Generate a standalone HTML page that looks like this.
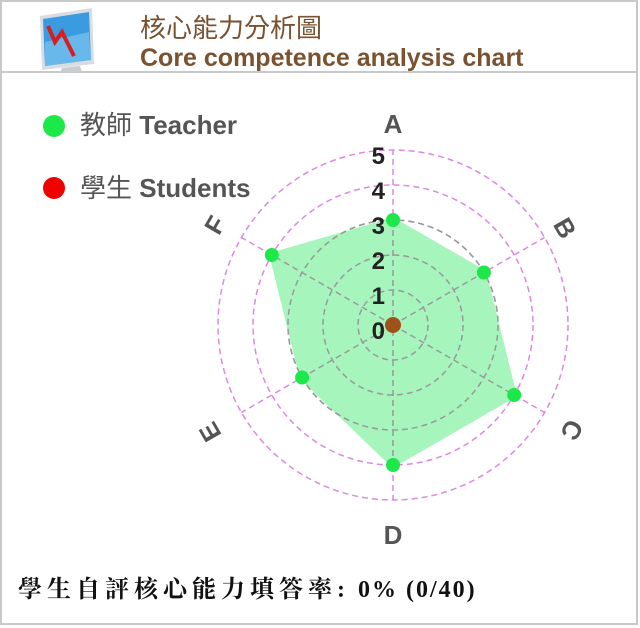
<!DOCTYPE html>
<html><head><meta charset="utf-8"><style>
html,body{margin:0;padding:0;background:#fff;}
body{width:640px;height:628px;overflow:hidden;position:relative;}
</style></head><body>
<svg width="640" height="628" viewBox="0 0 640 628" xmlns="http://www.w3.org/2000/svg" style="position:absolute;left:0;top:0">
<rect x="1" y="1" width="636" height="623" fill="#fff" stroke="#c8c8c8" stroke-width="2"/>
<line x1="1" y1="72" x2="637" y2="72" stroke="#c8c8c8" stroke-width="2"/>
<g>
<polygon points="40,16 92,8 94,64 42,70" fill="#d8dde2"/>
<polygon points="43,19 89,12 91,60 45,66" fill="#3a9be0"/>
<polygon points="45,42 89,32 91,60 45,66" fill="#7cc4f0" opacity="0.7"/>
<polyline points="48,26 55,42 62,32 74,56" fill="none" stroke="#d42020" stroke-width="4"/>
<polygon points="62,68 80,66 82,72 60,73" fill="#c8cdd2"/>
</g>
<text x="140" y="37" font-family="Liberation Sans,'Noto Sans CJK TC',sans-serif" font-size="26" fill="#7a5230">核心能力分析圖</text>
<text x="140" y="66" font-family="Liberation Sans,sans-serif" font-size="25" font-weight="bold" fill="#7a5230">Core competence analysis chart</text>
<circle cx="54" cy="126" r="11" fill="#1de84a"/>
<text x="80" y="134" font-family="Liberation Sans,'Noto Sans CJK TC',sans-serif" font-size="26" font-weight="bold" fill="#555"><tspan font-weight="normal">教師</tspan> Teacher</text>
<circle cx="54" cy="188" r="11" fill="#f00000"/>
<text x="80" y="197" font-family="Liberation Sans,'Noto Sans CJK TC',sans-serif" font-size="26" font-weight="bold" fill="#555"><tspan font-weight="normal">學生</tspan> Students</text>
<g fill="none" stroke="#dd88e0" stroke-width="1.5" stroke-dasharray="6,4">
<circle cx="393" cy="325" r="105"/>
<circle cx="393" cy="325" r="140"/>
<circle cx="393" cy="325" r="175"/>
<line x1="393" y1="325" x2="393" y2="150"/>
<line x1="393" y1="325" x2="544.6" y2="237.5"/>
<line x1="393" y1="325" x2="544.6" y2="412.5"/>
<line x1="393" y1="325" x2="393" y2="500"/>
<line x1="393" y1="325" x2="241.4" y2="412.5"/>
<line x1="393" y1="325" x2="241.4" y2="237.5"/>
</g>
<polygon points="393,220 483.9,272.5 514.2,395 393,465 302.1,377.5 271.8,255" fill="#a6f5bd" stroke="#a6f5bd" stroke-width="5" stroke-linejoin="round"/>
<g fill="none" stroke="#999" stroke-width="1.5" stroke-dasharray="6,4">
<circle cx="393" cy="325" r="35"/>
<circle cx="393" cy="325" r="70"/>
<circle cx="393" cy="325" r="105"/>
<line x1="393" y1="220" x2="393" y2="465"/>
<line x1="393" y1="325" x2="483.9" y2="272.5"/>
<line x1="393" y1="325" x2="514.2" y2="395"/>
<line x1="393" y1="325" x2="302.1" y2="377.5"/>
<line x1="393" y1="325" x2="271.8" y2="255"/>
</g>
<g fill="#1de84a">
<circle cx="393" cy="220" r="7"/><circle cx="483.9" cy="272.5" r="7"/><circle cx="514.2" cy="395" r="7"/>
<circle cx="393" cy="465" r="7"/><circle cx="302.1" cy="377.5" r="7"/><circle cx="271.8" cy="255" r="7"/>
</g>
<circle cx="393" cy="325" r="8" fill="#a0501a"/>
<g font-family="Liberation Sans,sans-serif" font-size="24" font-weight="bold" fill="#222" text-anchor="end">
<text x="385" y="164">5</text><text x="385" y="199">4</text><text x="385" y="234">3</text>
<text x="385" y="269">2</text><text x="385" y="304">1</text><text x="385" y="339">0</text>
</g>
<g font-family="Liberation Sans,sans-serif" font-size="26" font-weight="bold" fill="#555" text-anchor="middle">
<text x="393" y="133">A</text>
<text transform="translate(565,228) rotate(60)" y="9">B</text>
<text transform="translate(572,430) rotate(120)" y="9">C</text>
<text x="393" y="544">D</text>
<text transform="translate(210,432) rotate(240)" y="9">E</text>
<text transform="translate(215,225) rotate(300)" y="9">F</text>
</g>
<text x="18" y="597" font-family="Liberation Serif,'Noto Serif CJK SC',serif" font-size="24" font-weight="bold" fill="#111"><tspan letter-spacing="5">學生自評核心能力填答率:</tspan><tspan letter-spacing="2"> 0% (0/40)</tspan></text>
</svg>
</body></html>
